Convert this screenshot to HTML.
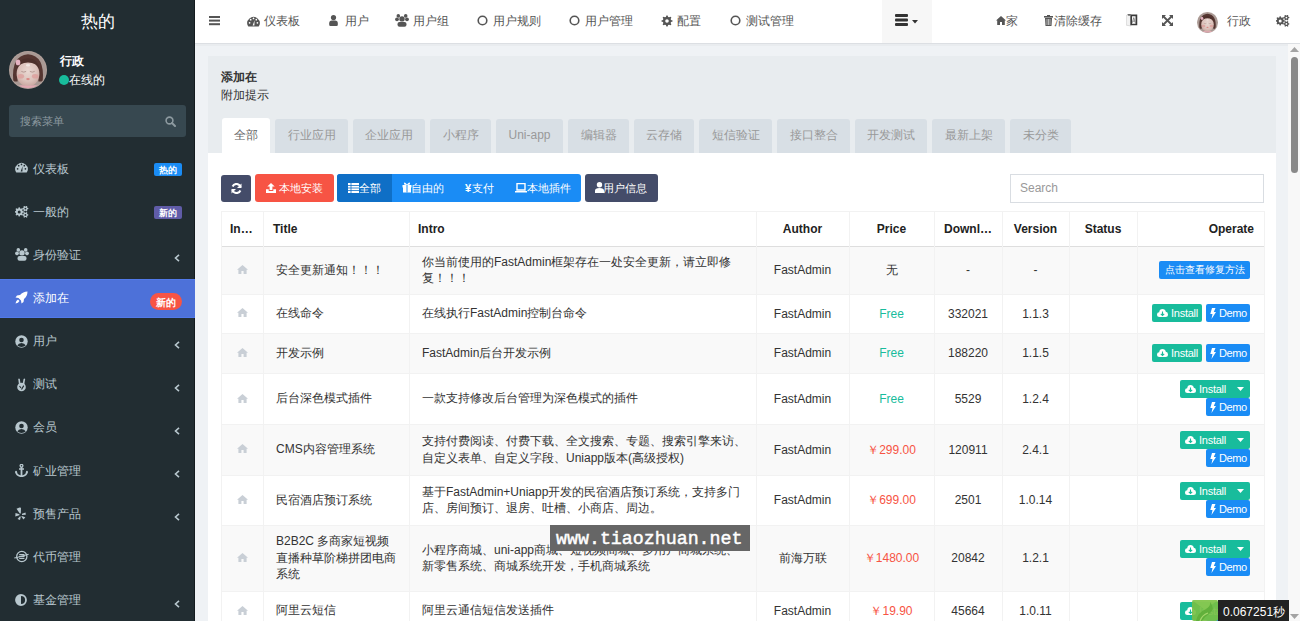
<!DOCTYPE html><html><head><meta charset="utf-8"><style>
*{box-sizing:border-box}
html,body{margin:0;padding:0;width:1300px;height:621px;overflow:hidden;background:#eff2f5;font-family:"Liberation Sans",sans-serif;font-size:12px;color:#333}
.a{position:absolute;white-space:nowrap}
svg{display:block}
</style></head><body>
<div class="a" style="left:0;top:0;width:195px;height:621px;background:#222d32"></div>
<div class="a" style="left:0;top:0;width:195px;height:43px;background:#222d32"></div>
<div class="a" style="left:194px;top:0;width:1px;height:621px;background:#141b1f"></div>
<div class="a" style="left:0;top:10px;width:195px;text-align:center;color:#fff;font-size:17px;line-height:24px">热的</div>
<svg class="a" style="left:9px;top:51px" width="38" height="38" viewBox="0 0 40 40">
<defs><clipPath id="c9"><circle cx="20" cy="20" r="19"/></clipPath>
<radialGradient id="f9" cx="50%" cy="40%" r="60%"><stop offset="0" stop-color="#e9d8d2"/><stop offset="0.65" stop-color="#dcc2bb"/><stop offset="1" stop-color="#c9a7a0"/></radialGradient></defs>
<circle cx="20" cy="20" r="20" fill="#b3a29c"/>
<g clip-path="url(#c9)">
<rect x="0" y="0" width="40" height="40" fill="#a99994"/>
<path d="M4.5 32 Q2 5 20 3.5 Q38 5 35.5 32 L31 32 Q31 14 20 13 Q9 14 9 32Z" fill="#553631"/>
<ellipse cx="20" cy="24" rx="12" ry="13.5" fill="url(#f9)"/>
<path d="M8 19 Q9 8 20 7.5 Q31 8 32 19 Q29 12 20 12 Q11 12 8 19Z" fill="#4d302b"/>
<ellipse cx="20" cy="15" rx="2.2" ry="1.4" fill="#f4eeea" opacity="0.8"/>
<ellipse cx="12.5" cy="26.5" rx="3.4" ry="2.4" fill="#dc9c9a" opacity="0.75"/>
<ellipse cx="27.5" cy="26.5" rx="3.4" ry="2.4" fill="#dc9c9a" opacity="0.75"/>
<path d="M13 21.5 Q15.5 23 18 21.5 M22 21.5 Q24.5 23 27 21.5" stroke="#a58a83" stroke-width="0.8" fill="none"/>
<ellipse cx="20" cy="29.5" rx="1.9" ry="1.2" fill="#d98a86"/>
<path d="M0 40 Q6 34.5 20 36.5 Q34 34.5 40 40Z" fill="#e3a9b3"/>
<ellipse cx="9.5" cy="12" rx="2.4" ry="3" fill="#e6b3c2"/>
</g></svg>
<div class="a" style="left:60px;top:53px;color:#fff;font-weight:bold;font-size:12px;line-height:16px">行政</div>
<div class="a" style="left:59px;top:75px;width:10px;height:10px;border-radius:50%;background:#18bc9c"></div>
<div class="a" style="left:69px;top:72px;color:#fff;font-size:12px;line-height:16px">在线的</div>
<div class="a" style="left:9px;top:105px;width:177px;height:32px;background:#374850;border-radius:3px"></div>
<div class="a" style="left:20px;top:113px;color:#8d9aa0;font-size:11px;line-height:16px">搜索菜单</div>
<svg class="a" style="left:165px;top:116px" width="11" height="11" viewBox="0 0 11 11"><circle cx="4.5" cy="4.5" r="3.4" fill="none" stroke="#8d9aa0" stroke-width="1.6"/><path d="M7 7 L10 10" stroke="#8d9aa0" stroke-width="2" stroke-linecap="round"/></svg>
<div class="a" style="left:15px;top:162.0px"><svg width="13" height="11" viewBox="0 0 13 11"><path d="M1.3 10.5 A6.2 6.2 0 1 1 11.7 10.5Z" fill="#b8c7ce"/><circle cx="2.6" cy="6.8" r="0.85" fill="#222d32"/><circle cx="3.7" cy="3.7" r="0.85" fill="#222d32"/><circle cx="6.5" cy="2.4" r="0.85" fill="#222d32"/><circle cx="9.3" cy="3.7" r="0.85" fill="#222d32"/><circle cx="10.4" cy="6.8" r="0.85" fill="#222d32"/><path d="M5.6 9.6 L7.6 4.2 L7.4 9.6Z" fill="#222d32"/></svg></div>
<div class="a" style="left:33px;top:160.5px;color:#b8c7ce;font-size:12px;line-height:16px">仪表板</div>
<div class="a" style="left:154px;top:162.5px;width:28px;height:13px;border-radius:2px;background:#1a8cf5;color:#fff;font-size:9px;font-weight:bold;line-height:14px;text-align:center">热的</div>
<div class="a" style="left:15px;top:206.0px"><svg width="14" height="13" viewBox="0 0 14 13"><path fill-rule="evenodd" d="M7.58 4.98 L8.87 5.38 L8.87 6.42 L7.58 6.82 L7.24 7.63 L7.87 8.84 L7.14 9.57 L5.93 8.94 L5.12 9.28 L4.72 10.57 L3.68 10.57 L3.28 9.28 L2.47 8.94 L1.26 9.57 L0.53 8.84 L1.16 7.63 L0.82 6.82 L-0.47 6.42 L-0.47 5.38 L0.82 4.98 L1.16 4.17 L0.53 2.96 L1.26 2.23 L2.47 2.86 L3.28 2.52 L3.68 1.23 L4.72 1.23 L5.12 2.52 L5.93 2.86 L7.14 2.23 L7.87 2.96 L7.24 4.17Z M5.70 5.90 A1.5 1.5 0 1 0 2.70 5.90 A1.5 1.5 0 1 0 5.70 5.90Z" fill="#b8c7ce"/><path fill-rule="evenodd" d="M12.46 1.83 L13.37 2.16 L13.37 3.04 L12.46 3.37 L12.10 4.00 L12.26 4.95 L11.50 5.39 L10.77 4.77 L10.03 4.77 L9.30 5.39 L8.54 4.95 L8.70 4.00 L8.34 3.37 L7.43 3.04 L7.43 2.16 L8.34 1.83 L8.70 1.20 L8.54 0.25 L9.30 -0.19 L10.03 0.43 L10.77 0.43 L11.50 -0.19 L12.26 0.25 L12.10 1.20Z M11.30 2.60 A0.9 0.9 0 1 0 9.50 2.60 A0.9 0.9 0 1 0 11.30 2.60Z" fill="#b8c7ce"/><path fill-rule="evenodd" d="M12.46 8.13 L13.37 8.46 L13.37 9.34 L12.46 9.67 L12.10 10.30 L12.26 11.25 L11.50 11.69 L10.77 11.07 L10.03 11.07 L9.30 11.69 L8.54 11.25 L8.70 10.30 L8.34 9.67 L7.43 9.34 L7.43 8.46 L8.34 8.13 L8.70 7.50 L8.54 6.55 L9.30 6.11 L10.03 6.73 L10.77 6.73 L11.50 6.11 L12.26 6.55 L12.10 7.50Z M11.30 8.90 A0.9 0.9 0 1 0 9.50 8.90 A0.9 0.9 0 1 0 11.30 8.90Z" fill="#b8c7ce"/></svg></div>
<div class="a" style="left:33px;top:203.7px;color:#b8c7ce;font-size:12px;line-height:16px">一般的</div>
<div class="a" style="left:154px;top:205.7px;width:28px;height:13px;border-radius:2px;background:#605ca8;color:#fff;font-size:9px;font-weight:bold;line-height:14px;text-align:center">新的</div>
<div class="a" style="left:15px;top:248.3px"><svg width="14" height="13" viewBox="0 0 14 13"><circle cx="3.3" cy="1.9" r="1.8" fill="#b8c7ce"/><circle cx="10.7" cy="1.9" r="1.8" fill="#b8c7ce"/><circle cx="2" cy="5.3" r="1.9" fill="#b8c7ce"/><circle cx="12" cy="5.3" r="1.9" fill="#b8c7ce"/><circle cx="7" cy="4.9" r="2.7" fill="#b8c7ce"/><rect x="2.5" y="8" width="9" height="4.8" rx="2" fill="#b8c7ce"/></svg></div>
<div class="a" style="left:33px;top:246.8px;color:#b8c7ce;font-size:12px;line-height:16px">身份验证</div>
<div class="a" style="left:174px;top:254.3px"><svg width="6" height="8" viewBox="0 0 6 8"><path d="M5 0.8 L1.5 4 L5 7.2" fill="none" stroke="#b8c7ce" stroke-width="1.6"/></svg></div>
<div class="a" style="left:0;top:279px;width:195px;height:39px;background:#4d71d9;border-top:1px solid #5179ea;border-bottom:1px solid #5179ea"></div>
<div class="a" style="left:15px;top:291.4px"><svg width="13" height="13" viewBox="0 0 13 13"><path d="M12.5 0.5 Q8 0.5 5 4 L2 4.5 L0.5 6.5 L3.5 7 L6 9.5 L6.5 12.5 L8.5 11 L9 8 Q12.5 5 12.5 0.5Z" fill="#fff"/><path d="M3 8.5 Q1 9.5 0.5 12.5 Q3.5 12 4.5 10Z" fill="#fff"/></svg></div>
<div class="a" style="left:33px;top:289.9px;color:#fff;font-size:12px;line-height:16px">添加在</div>
<div class="a" style="left:150px;top:293px;width:32px;height:17px;border-radius:9px;background:#f75444;color:#fff;font-size:10px;font-weight:bold;line-height:19px;text-align:center">新的</div>
<div class="a" style="left:15px;top:334.6px"><svg width="13" height="13" viewBox="0 0 13 13"><circle cx="6.5" cy="6.5" r="6.2" fill="#b8c7ce"/><circle cx="6.5" cy="5" r="2.3" fill="#222d32"/><path d="M2.3 10.6 Q3.5 8 6.5 8 Q9.5 8 10.7 10.6 Q9 12 6.5 12 Q4 12 2.3 10.6Z" fill="#222d32"/></svg></div>
<div class="a" style="left:33px;top:333.1px;color:#b8c7ce;font-size:12px;line-height:16px">用户</div>
<div class="a" style="left:174px;top:340.6px"><svg width="6" height="8" viewBox="0 0 6 8"><path d="M5 0.8 L1.5 4 L5 7.2" fill="none" stroke="#b8c7ce" stroke-width="1.6"/></svg></div>
<div class="a" style="left:14.5px;top:378.2px"><svg width="13" height="14" viewBox="0 0 13 14"><path d="M3.2 1 Q4 0.2 4.8 1 L5.6 6 L4 6.5Z" fill="#b8c7ce"/><path d="M8.6 1 Q9.4 0.2 10.2 1 L9.2 6.5 L7.6 6Z" fill="#b8c7ce"/><circle cx="6.5" cy="9" r="4.3" fill="#b8c7ce"/><path d="M4.5 8 L6 10 M8.8 7.6 Q7.5 9.5 6.5 11.5" stroke="#222d32" stroke-width="1.1" fill="none"/></svg></div>
<div class="a" style="left:33px;top:376.2px;color:#b8c7ce;font-size:12px;line-height:16px">测试</div>
<div class="a" style="left:174px;top:383.8px"><svg width="6" height="8" viewBox="0 0 6 8"><path d="M5 0.8 L1.5 4 L5 7.2" fill="none" stroke="#b8c7ce" stroke-width="1.6"/></svg></div>
<div class="a" style="left:15px;top:420.9px"><svg width="13" height="13" viewBox="0 0 13 13"><circle cx="6.5" cy="6.5" r="6.2" fill="#b8c7ce"/><circle cx="6.5" cy="5" r="2.3" fill="#222d32"/><path d="M2.3 10.6 Q3.5 8 6.5 8 Q9.5 8 10.7 10.6 Q9 12 6.5 12 Q4 12 2.3 10.6Z" fill="#222d32"/></svg></div>
<div class="a" style="left:33px;top:419.4px;color:#b8c7ce;font-size:12px;line-height:16px">会员</div>
<div class="a" style="left:174px;top:426.9px"><svg width="6" height="8" viewBox="0 0 6 8"><path d="M5 0.8 L1.5 4 L5 7.2" fill="none" stroke="#b8c7ce" stroke-width="1.6"/></svg></div>
<div class="a" style="left:15px;top:464.1px"><svg width="13" height="13" viewBox="0 0 13 13"><circle cx="6.5" cy="1.8" r="1.4" fill="none" stroke="#b8c7ce" stroke-width="1.3"/><path d="M6.5 3 V12" stroke="#b8c7ce" stroke-width="1.8"/><path d="M4 5 H9" stroke="#b8c7ce" stroke-width="1.5"/><path d="M0.8 7.5 Q1.5 12 6.5 12.3 Q11.5 12 12.2 7.5" fill="none" stroke="#b8c7ce" stroke-width="1.7"/><path d="M0 8.5 L1 6.5 L2.5 8.5Z M13 8.5 L12 6.5 L10.5 8.5Z" fill="#b8c7ce"/></svg></div>
<div class="a" style="left:33px;top:462.6px;color:#b8c7ce;font-size:12px;line-height:16px">矿业管理</div>
<div class="a" style="left:174px;top:470.1px"><svg width="6" height="8" viewBox="0 0 6 8"><path d="M5 0.8 L1.5 4 L5 7.2" fill="none" stroke="#b8c7ce" stroke-width="1.6"/></svg></div>
<div class="a" style="left:15px;top:507.2px"><svg width="11" height="13" viewBox="0 0 11 13"><path d="M4.5 0.5 L6 0.8 L5.8 6.5 L4.8 6.5 L1.5 1.8Z" fill="#b8c7ce"/><path d="M0.5 6 L4.5 7.3 L4.3 8.3 L0.3 9.5Z" fill="#b8c7ce"/><path d="M5 9.3 L5.8 9.8 L5 13 L2.5 12Z" fill="#b8c7ce"/><path d="M7 6.8 L10.5 5.5 L10.8 7.8 L7 8Z" fill="#b8c7ce"/><path d="M6.8 9 L10.3 10.3 L8.5 12.5 L6.3 9.5Z" fill="#b8c7ce"/></svg></div>
<div class="a" style="left:33px;top:505.7px;color:#b8c7ce;font-size:12px;line-height:16px">预售产品</div>
<div class="a" style="left:174px;top:513.2px"><svg width="6" height="8" viewBox="0 0 6 8"><path d="M5 0.8 L1.5 4 L5 7.2" fill="none" stroke="#b8c7ce" stroke-width="1.6"/></svg></div>
<div class="a" style="left:14px;top:550.3px"><svg width="15" height="13" viewBox="0 0 15 13"><circle cx="7.8" cy="6.5" r="5.1" fill="none" stroke="#b8c7ce" stroke-width="1.3"/><path d="M5.2 4.7 H10.4 M5 6.5 H10.6 M5.2 8.3 H10.4" stroke="#b8c7ce" stroke-width="1.2"/><path d="M0.3 8 Q5 7 14.6 4.2" fill="none" stroke="#b8c7ce" stroke-width="1.1"/></svg></div>
<div class="a" style="left:33px;top:548.8px;color:#b8c7ce;font-size:12px;line-height:16px">代币管理</div>
<div class="a" style="left:15px;top:593.5px"><svg width="12" height="12" viewBox="0 0 12 12"><circle cx="6" cy="6" r="5" fill="none" stroke="#b8c7ce" stroke-width="1.8"/><path d="M6 1 A5 5 0 0 0 6 11Z" fill="#b8c7ce"/></svg></div>
<div class="a" style="left:33px;top:592.0px;color:#b8c7ce;font-size:12px;line-height:16px">基金管理</div>
<div class="a" style="left:174px;top:599.5px"><svg width="6" height="8" viewBox="0 0 6 8"><path d="M5 0.8 L1.5 4 L5 7.2" fill="none" stroke="#b8c7ce" stroke-width="1.6"/></svg></div>
<div class="a" style="left:195px;top:0;width:1105px;height:44px;background:#fff;border-bottom:1px solid #dcdfe3"></div>
<div class="a" style="left:195px;top:44px;width:1093px;height:2px;background:#e9ecef"></div>
<svg class="a" style="left:209px;top:16px" width="11" height="10" viewBox="0 0 11 10"><rect x="0" y="0" width="11" height="2" fill="#555"/><rect x="0" y="3.6" width="11" height="2" fill="#555"/><rect x="0" y="7.2" width="11" height="2" fill="#555"/></svg>
<div class="a" style="left:247px;top:16px"><svg width="13" height="11" viewBox="0 0 13 11"><path d="M1.3 10.5 A6.2 6.2 0 1 1 11.7 10.5Z" fill="#555"/><circle cx="2.6" cy="6.8" r="0.85" fill="#fff"/><circle cx="3.7" cy="3.7" r="0.85" fill="#fff"/><circle cx="6.5" cy="2.4" r="0.85" fill="#fff"/><circle cx="9.3" cy="3.7" r="0.85" fill="#fff"/><circle cx="10.4" cy="6.8" r="0.85" fill="#fff"/><path d="M5.6 9.6 L7.6 4.2 L7.4 9.6Z" fill="#fff"/></svg></div>
<div class="a" style="left:264px;top:13px;color:#555;font-size:12px;line-height:16px">仪表板</div>
<div class="a" style="left:329px;top:15px"><svg width="9" height="12" viewBox="0 0 9 12"><circle cx="4.5" cy="2.6" r="2.6" fill="#555"/><path d="M0.2 9.8 V8.2 Q0.2 5.6 3 5.6 H6 Q8.8 5.6 8.8 8.2 V9.8 Q8.8 11 7.6 11 H1.4 Q0.2 11 0.2 9.8Z" fill="#555"/></svg></div>
<div class="a" style="left:345px;top:13px;color:#555;font-size:12px;line-height:16px">用户</div>
<div class="a" style="left:395px;top:14px"><svg width="14" height="13" viewBox="0 0 14 13"><circle cx="3.3" cy="1.9" r="1.8" fill="#555"/><circle cx="10.7" cy="1.9" r="1.8" fill="#555"/><circle cx="2" cy="5.3" r="1.9" fill="#555"/><circle cx="12" cy="5.3" r="1.9" fill="#555"/><circle cx="7" cy="4.9" r="2.7" fill="#555"/><rect x="2.5" y="8" width="9" height="4.8" rx="2" fill="#555"/></svg></div>
<div class="a" style="left:413px;top:13px;color:#555;font-size:12px;line-height:16px">用户组</div>
<div class="a" style="left:477px;top:15px"><svg width="11" height="11" viewBox="0 0 11 11"><circle cx="5.5" cy="5.5" r="4.3" fill="none" stroke="#555" stroke-width="1.6"/></svg></div>
<div class="a" style="left:493px;top:13px;color:#555;font-size:12px;line-height:16px">用户规则</div>
<div class="a" style="left:569px;top:15px"><svg width="11" height="11" viewBox="0 0 11 11"><circle cx="5.5" cy="5.5" r="4.3" fill="none" stroke="#555" stroke-width="1.6"/></svg></div>
<div class="a" style="left:585px;top:13px;color:#555;font-size:12px;line-height:16px">用户管理</div>
<div class="a" style="left:661px;top:15px"><svg width="12" height="12" viewBox="0 0 12 12"><path fill-rule="evenodd" d="M10.05 4.89 L11.57 5.39 L11.57 6.61 L10.05 7.11 L9.65 8.08 L10.37 9.50 L9.50 10.37 L8.08 9.65 L7.11 10.05 L6.61 11.57 L5.39 11.57 L4.89 10.05 L3.92 9.65 L2.50 10.37 L1.63 9.50 L2.35 8.08 L1.95 7.11 L0.43 6.61 L0.43 5.39 L1.95 4.89 L2.35 3.92 L1.63 2.50 L2.50 1.63 L3.92 2.35 L4.89 1.95 L5.39 0.43 L6.61 0.43 L7.11 1.95 L8.08 2.35 L9.50 1.63 L10.37 2.50 L9.65 3.92Z M7.80 6.00 A1.8 1.8 0 1 0 4.20 6.00 A1.8 1.8 0 1 0 7.80 6.00Z" fill="#555"/></svg></div>
<div class="a" style="left:677px;top:13px;color:#555;font-size:12px;line-height:16px">配置</div>
<div class="a" style="left:730px;top:15px"><svg width="11" height="11" viewBox="0 0 11 11"><circle cx="5.5" cy="5.5" r="4.3" fill="none" stroke="#555" stroke-width="1.6"/></svg></div>
<div class="a" style="left:746px;top:13px;color:#555;font-size:12px;line-height:16px">测试管理</div>
<div class="a" style="left:882px;top:0;width:50px;height:43px;background:#f7f7f7"></div>
<svg class="a" style="left:895px;top:14px" width="13" height="12" viewBox="0 0 13 12"><rect x="0" y="0" width="13" height="3" rx="1" fill="#333"/><rect x="0" y="4.5" width="13" height="3" rx="1" fill="#333"/><rect x="0" y="9" width="13" height="3" rx="1" fill="#333"/></svg>
<svg class="a" style="left:912px;top:20px" width="6" height="4" viewBox="0 0 6 4"><path d="M0 0H6L3 3.5Z" fill="#333"/></svg>
<svg class="a" style="left:996px;top:16px" width="10" height="9" viewBox="0 0 10 9"><path d="M5 0 L10 4.5 L8.8 4.5 L8.8 9 L6 9 L6 6 L4 6 L4 9 L1.2 9 L1.2 4.5 L0 4.5Z" fill="#555"/></svg>
<div class="a" style="left:1006px;top:13px;color:#555;font-size:12px;line-height:16px">家</div>
<svg class="a" style="left:1044px;top:15px" width="9" height="11" viewBox="0 0 9 11"><rect x="0" y="1" width="9" height="1.6" fill="#555"/><rect x="3" y="0" width="3" height="1.5" fill="#555"/><path d="M1 3 H8 L7.5 11 H1.5Z" fill="#555"/><path d="M3 4 V10 M4.5 4 V10 M6 4 V10" stroke="#fff" stroke-width="0.6"/></svg>
<div class="a" style="left:1054px;top:13px;color:#555;font-size:12px;line-height:16px">清除缓存</div>
<svg class="a" style="left:1126px;top:14px" width="12" height="13" viewBox="0 0 12 13"><path d="M0.3 1.5 L5 0.5 L5 12 L0.3 11.2Z" fill="#f2f2f2" stroke="#c8c8c8" stroke-width="0.6"/><path d="M1.2 0.3 L5 0.3 L3 2Z" fill="#444"/><path d="M5.2 1.3 H10.4 V10.5 H5.2Z" fill="#fff" stroke="#3a3a3a" stroke-width="1.7"/><path d="M6.3 8.8 L7.8 3.6 L9.3 8.8 M6.8 7.2 H8.8" stroke="#666" stroke-width="0.7" fill="none"/></svg>
<svg class="a" style="left:1161.5px;top:15px" width="11" height="11" viewBox="0 0 11 11"><path d="M0 0 H4 L0 4Z M11 0 V4 L7 0Z M0 11 V7 L4 11Z M11 11 H7 L11 7Z" fill="#555"/><path d="M1.5 1.5 L9.5 9.5 M9.5 1.5 L1.5 9.5" stroke="#555" stroke-width="1.8"/></svg>
<svg class="a" style="left:1197px;top:12px" width="21" height="21" viewBox="0 0 40 40">
<defs><clipPath id="cc1197"><circle cx="20" cy="20" r="19"/></clipPath>
<radialGradient id="f1197" cx="50%" cy="40%" r="60%"><stop offset="0" stop-color="#e9d8d2"/><stop offset="0.65" stop-color="#dcc2bb"/><stop offset="1" stop-color="#c9a7a0"/></radialGradient></defs>
<circle cx="20" cy="20" r="20" fill="#b3a29c"/>
<g clip-path="url(#cc1197)">
<rect x="0" y="0" width="40" height="40" fill="#a99994"/>
<path d="M4.5 32 Q2 5 20 3.5 Q38 5 35.5 32 L31 32 Q31 14 20 13 Q9 14 9 32Z" fill="#553631"/>
<ellipse cx="20" cy="24" rx="12" ry="13.5" fill="url(#f1197)"/>
<path d="M8 19 Q9 8 20 7.5 Q31 8 32 19 Q29 12 20 12 Q11 12 8 19Z" fill="#4d302b"/>
<ellipse cx="20" cy="15" rx="2.2" ry="1.4" fill="#f4eeea" opacity="0.8"/>
<ellipse cx="12.5" cy="26.5" rx="3.4" ry="2.4" fill="#dc9c9a" opacity="0.75"/>
<ellipse cx="27.5" cy="26.5" rx="3.4" ry="2.4" fill="#dc9c9a" opacity="0.75"/>
<path d="M13 21.5 Q15.5 23 18 21.5 M22 21.5 Q24.5 23 27 21.5" stroke="#a58a83" stroke-width="0.8" fill="none"/>
<ellipse cx="20" cy="29.5" rx="1.9" ry="1.2" fill="#d98a86"/>
<path d="M0 40 Q6 34.5 20 36.5 Q34 34.5 40 40Z" fill="#e3a9b3"/>
<ellipse cx="9.5" cy="12" rx="2.4" ry="3" fill="#e6b3c2"/>
</g></svg>
<div class="a" style="left:1227px;top:13px;color:#555;font-size:12px;line-height:16px">行政</div>
<div class="a" style="left:1276px;top:15px"><svg width="14" height="13" viewBox="0 0 14 13"><path fill-rule="evenodd" d="M7.58 4.98 L8.87 5.38 L8.87 6.42 L7.58 6.82 L7.24 7.63 L7.87 8.84 L7.14 9.57 L5.93 8.94 L5.12 9.28 L4.72 10.57 L3.68 10.57 L3.28 9.28 L2.47 8.94 L1.26 9.57 L0.53 8.84 L1.16 7.63 L0.82 6.82 L-0.47 6.42 L-0.47 5.38 L0.82 4.98 L1.16 4.17 L0.53 2.96 L1.26 2.23 L2.47 2.86 L3.28 2.52 L3.68 1.23 L4.72 1.23 L5.12 2.52 L5.93 2.86 L7.14 2.23 L7.87 2.96 L7.24 4.17Z M5.70 5.90 A1.5 1.5 0 1 0 2.70 5.90 A1.5 1.5 0 1 0 5.70 5.90Z" fill="#555"/><path fill-rule="evenodd" d="M12.46 1.83 L13.37 2.16 L13.37 3.04 L12.46 3.37 L12.10 4.00 L12.26 4.95 L11.50 5.39 L10.77 4.77 L10.03 4.77 L9.30 5.39 L8.54 4.95 L8.70 4.00 L8.34 3.37 L7.43 3.04 L7.43 2.16 L8.34 1.83 L8.70 1.20 L8.54 0.25 L9.30 -0.19 L10.03 0.43 L10.77 0.43 L11.50 -0.19 L12.26 0.25 L12.10 1.20Z M11.30 2.60 A0.9 0.9 0 1 0 9.50 2.60 A0.9 0.9 0 1 0 11.30 2.60Z" fill="#555"/><path fill-rule="evenodd" d="M12.46 8.13 L13.37 8.46 L13.37 9.34 L12.46 9.67 L12.10 10.30 L12.26 11.25 L11.50 11.69 L10.77 11.07 L10.03 11.07 L9.30 11.69 L8.54 11.25 L8.70 10.30 L8.34 9.67 L7.43 9.34 L7.43 8.46 L8.34 8.13 L8.70 7.50 L8.54 6.55 L9.30 6.11 L10.03 6.73 L10.77 6.73 L11.50 6.11 L12.26 6.55 L12.10 7.50Z M11.30 8.90 A0.9 0.9 0 1 0 9.50 8.90 A0.9 0.9 0 1 0 11.30 8.90Z" fill="#555"/></svg></div>
<div class="a" style="left:1288px;top:44px;width:12px;height:577px;background:#f8f8f8"></div>
<div class="a" style="left:1291px;top:57px;width:7px;height:116px;border-radius:4px;background:#898989"></div>
<svg class="a" style="left:1290px;top:47px" width="9" height="5" viewBox="0 0 9 5"><path d="M0 5 L4.5 0 L9 5Z" fill="#a3a3a3"/></svg>
<svg class="a" style="left:1290px;top:614px" width="9" height="5" viewBox="0 0 9 5"><path d="M0 0 L4.5 5 L9 0Z" fill="#a3a3a3"/></svg>
<div class="a" style="left:208px;top:56px;width:1068px;height:565px;background:#fff"></div>
<div class="a" style="left:208px;top:56px;width:1068px;height:97px;background:#e8ecef"></div>
<div class="a" style="left:221px;top:69px;font-weight:bold;color:#333;font-size:12px;line-height:16px">添加在</div>
<div class="a" style="left:221px;top:87px;color:#333;font-size:12px;line-height:16px">附加提示</div>
<div class="a" style="left:222px;top:118px;width:48px;height:35px;background:#fff;border-radius:3px 3px 0 0"></div>
<div class="a" style="left:222px;top:127px;width:48px;text-align:center;color:#666;font-size:12px;line-height:16px">全部</div>
<div class="a" style="left:275px;top:119px;width:73px;height:34px;background:#d8dfe5;border-radius:3px 3px 0 0"></div>
<div class="a" style="left:275px;top:127px;width:73px;text-align:center;color:#999;font-size:12px;line-height:16px">行业应用</div>
<div class="a" style="left:353px;top:119px;width:72px;height:34px;background:#d8dfe5;border-radius:3px 3px 0 0"></div>
<div class="a" style="left:353px;top:127px;width:72px;text-align:center;color:#999;font-size:12px;line-height:16px">企业应用</div>
<div class="a" style="left:430px;top:119px;width:61px;height:34px;background:#d8dfe5;border-radius:3px 3px 0 0"></div>
<div class="a" style="left:430px;top:127px;width:61px;text-align:center;color:#999;font-size:12px;line-height:16px">小程序</div>
<div class="a" style="left:496px;top:119px;width:67px;height:34px;background:#d8dfe5;border-radius:3px 3px 0 0"></div>
<div class="a" style="left:496px;top:127px;width:67px;text-align:center;color:#999;font-size:12px;line-height:16px">Uni-app</div>
<div class="a" style="left:568px;top:119px;width:61px;height:34px;background:#d8dfe5;border-radius:3px 3px 0 0"></div>
<div class="a" style="left:568px;top:127px;width:61px;text-align:center;color:#999;font-size:12px;line-height:16px">编辑器</div>
<div class="a" style="left:634px;top:119px;width:60px;height:34px;background:#d8dfe5;border-radius:3px 3px 0 0"></div>
<div class="a" style="left:634px;top:127px;width:60px;text-align:center;color:#999;font-size:12px;line-height:16px">云存储</div>
<div class="a" style="left:699px;top:119px;width:73px;height:34px;background:#d8dfe5;border-radius:3px 3px 0 0"></div>
<div class="a" style="left:699px;top:127px;width:73px;text-align:center;color:#999;font-size:12px;line-height:16px">短信验证</div>
<div class="a" style="left:777px;top:119px;width:73px;height:34px;background:#d8dfe5;border-radius:3px 3px 0 0"></div>
<div class="a" style="left:777px;top:127px;width:73px;text-align:center;color:#999;font-size:12px;line-height:16px">接口整合</div>
<div class="a" style="left:855px;top:119px;width:72px;height:34px;background:#d8dfe5;border-radius:3px 3px 0 0"></div>
<div class="a" style="left:855px;top:127px;width:72px;text-align:center;color:#999;font-size:12px;line-height:16px">开发测试</div>
<div class="a" style="left:932px;top:119px;width:73px;height:34px;background:#d8dfe5;border-radius:3px 3px 0 0"></div>
<div class="a" style="left:932px;top:127px;width:73px;text-align:center;color:#999;font-size:12px;line-height:16px">最新上架</div>
<div class="a" style="left:1010px;top:119px;width:61px;height:34px;background:#d8dfe5;border-radius:3px 3px 0 0"></div>
<div class="a" style="left:1010px;top:127px;width:61px;text-align:center;color:#999;font-size:12px;line-height:16px">未分类</div>
<div class="a" style="left:221px;top:175px;width:30px;height:27px;background:#444c69;border-radius:3px"></div>
<svg class="a" style="left:231px;top:183px" width="11" height="11" viewBox="0 0 11 11"><path d="M9.5 4 A4.2 4.2 0 0 0 1.6 3.5" fill="none" stroke="#fff" stroke-width="2"/><path d="M10.5 0.5 V5 H6Z" fill="#fff"/><path d="M1.5 7 A4.2 4.2 0 0 0 9.4 7.5" fill="none" stroke="#fff" stroke-width="2"/><path d="M0.5 10.5 V6 H5Z" fill="#fff"/></svg>
<div class="a" style="left:255px;top:174px;width:79px;height:28px;background:#f75444;border-radius:3px"></div>
<svg class="a" style="left:266px;top:183px" width="10" height="10" viewBox="0 0 10 10"><path d="M5 0 L8.7 3.6 H6.4 V7 H3.6 V3.6 H1.3Z" fill="#fff"/><path d="M0 6.2 H2.7 V8 H7.3 V6.2 H10 V10 H0Z" fill="#fff"/></svg>
<div class="a" style="left:279px;top:180.4px;color:#fff;font-size:11px;line-height:16px">本地安装</div>
<div class="a" style="left:337px;top:174px;width:244px;height:28px;background:#1a8cf5;border-radius:3px"></div>
<div class="a" style="left:337px;top:174px;width:55px;height:28px;background:#0f6fc6;border-radius:3px 0 0 3px"></div>
<svg class="a" style="left:348px;top:183px" width="11" height="10" viewBox="0 0 11 10"><path d="M0 0H11V10H0Z" fill="#fff"/><path d="M0 2.5H11M0 5H11M0 7.5H11M3 0V10" stroke="#0f6fc6" stroke-width="0.8"/></svg>
<div class="a" style="left:359px;top:180.4px;color:#fff;font-size:11px;line-height:16px">全部</div>
<svg class="a" style="left:402px;top:182px" width="10" height="11" viewBox="0 0 10 11"><path d="M0.5 3H9.5V5.5H0.5Z M1 5.5H9V10.5H1Z" fill="#fff"/><path d="M5 2.5 Q2 -1 2 2 Q2 3 5 3 Q8 3 8 2 Q8 -1 5 2.5Z" fill="#fff"/><path d="M5 3V10.5" stroke="#1a8cf5" stroke-width="1"/></svg>
<div class="a" style="left:411px;top:180.4px;color:#fff;font-size:11px;line-height:16px">自由的</div>
<div class="a" style="left:465px;top:180.4px;color:#fff;font-size:11px;line-height:16px;font-weight:bold">¥</div>
<div class="a" style="left:472px;top:180.4px;color:#fff;font-size:11px;line-height:16px">支付</div>
<svg class="a" style="left:515px;top:183px" width="12" height="10" viewBox="0 0 12 10"><path d="M2 0.5H10V7H2Z" fill="none" stroke="#fff" stroke-width="1.4"/><path d="M0 8H12V9.5H0Z" fill="#fff"/></svg>
<div class="a" style="left:527px;top:180.4px;color:#fff;font-size:11px;line-height:16px">本地插件</div>
<div class="a" style="left:585px;top:174px;width:73px;height:28px;background:#444c69;border-radius:3px"></div>
<svg class="a" style="left:595px;top:182px" width="9" height="11" viewBox="0 0 9 11"><circle cx="4.5" cy="2.8" r="2.7" fill="#fff"/><path d="M0 11 V8.5 Q0 6 4.5 6 Q9 6 9 8.5 V11Z" fill="#fff"/></svg>
<div class="a" style="left:603px;top:180.4px;color:#fff;font-size:11px;line-height:16px">用户信息</div>
<div class="a" style="left:1010px;top:174px;width:254px;height:29px;background:#fff;border:1px solid #d9dde2"></div>
<div class="a" style="left:1020px;top:180px;color:#999;font-size:12px;line-height:16px">Search</div>
<div class="a" style="left:221px;top:211px;width:1043px;height:35px;background:#fff"></div>
<div class="a" style="left:221px;top:246px;width:1043px;height:48px;background:#f9f9f9"></div>
<div class="a" style="left:221px;top:294px;width:1043px;height:39px;background:#fff"></div>
<div class="a" style="left:221px;top:333px;width:1043px;height:40px;background:#f9f9f9"></div>
<div class="a" style="left:221px;top:373px;width:1043px;height:51px;background:#fff"></div>
<div class="a" style="left:221px;top:424px;width:1043px;height:51px;background:#f9f9f9"></div>
<div class="a" style="left:221px;top:475px;width:1043px;height:50px;background:#fff"></div>
<div class="a" style="left:221px;top:525px;width:1043px;height:66px;background:#f9f9f9"></div>
<div class="a" style="left:221px;top:591px;width:1043px;height:49px;background:#fff"></div>
<div class="a" style="left:221px;top:211px;width:1043px;height:1px;background:#f2f2f2"></div>
<div class="a" style="left:221px;top:246px;width:1043px;height:1px;background:#dedede"></div>
<div class="a" style="left:221px;top:294px;width:1043px;height:1px;background:#f2f2f2"></div>
<div class="a" style="left:221px;top:333px;width:1043px;height:1px;background:#f2f2f2"></div>
<div class="a" style="left:221px;top:373px;width:1043px;height:1px;background:#f2f2f2"></div>
<div class="a" style="left:221px;top:424px;width:1043px;height:1px;background:#f2f2f2"></div>
<div class="a" style="left:221px;top:475px;width:1043px;height:1px;background:#f2f2f2"></div>
<div class="a" style="left:221px;top:525px;width:1043px;height:1px;background:#f2f2f2"></div>
<div class="a" style="left:221px;top:591px;width:1043px;height:1px;background:#f2f2f2"></div>
<div class="a" style="left:221px;top:211px;width:1px;height:410px;background:#f2f2f2"></div>
<div class="a" style="left:263px;top:211px;width:1px;height:410px;background:#f2f2f2"></div>
<div class="a" style="left:409px;top:211px;width:1px;height:410px;background:#f2f2f2"></div>
<div class="a" style="left:756px;top:211px;width:1px;height:410px;background:#f2f2f2"></div>
<div class="a" style="left:849px;top:211px;width:1px;height:410px;background:#f2f2f2"></div>
<div class="a" style="left:934px;top:211px;width:1px;height:410px;background:#f2f2f2"></div>
<div class="a" style="left:1002px;top:211px;width:1px;height:410px;background:#f2f2f2"></div>
<div class="a" style="left:1069px;top:211px;width:1px;height:410px;background:#f2f2f2"></div>
<div class="a" style="left:1137px;top:211px;width:1px;height:410px;background:#f2f2f2"></div>
<div class="a" style="left:1264px;top:211px;width:1px;height:410px;background:#f2f2f2"></div>
<div class="a" style="left:230px;top:221px;font-weight:bold;color:#222;font-size:12px;line-height:16px">In…</div>
<div class="a" style="left:273px;top:221px;font-weight:bold;color:#222;font-size:12px;line-height:16px">Title</div>
<div class="a" style="left:418px;top:221px;font-weight:bold;color:#222;font-size:12px;line-height:16px">Intro</div>
<div class="a" style="left:756px;top:221px;width:93px;text-align:center;font-weight:bold;color:#222;font-size:12px;line-height:16px">Author</div>
<div class="a" style="left:849px;top:221px;width:85px;text-align:center;font-weight:bold;color:#222;font-size:12px;line-height:16px">Price</div>
<div class="a" style="left:934px;top:221px;width:68px;text-align:center;font-weight:bold;color:#222;font-size:12px;line-height:16px">Downl…</div>
<div class="a" style="left:1002px;top:221px;width:67px;text-align:center;font-weight:bold;color:#222;font-size:12px;line-height:16px">Version</div>
<div class="a" style="left:1069px;top:221px;width:68px;text-align:center;font-weight:bold;color:#222;font-size:12px;line-height:16px">Status</div>
<div class="a" style="left:1137px;top:221px;width:117px;text-align:right;font-weight:bold;color:#222;font-size:12px;line-height:16px">Operate</div>
<svg class="a" style="left:237px;top:265px" width="11" height="9" viewBox="0 0 11 9"><path d="M5.5 0 L11 4.8 L9.6 4.8 L9.6 9 L6.6 9 L6.6 6 L4.4 6 L4.4 9 L1.4 9 L1.4 4.8 L0 4.8Z" fill="#c9cfd6"/></svg>
<div class="a" style="left:276px;top:261.8px;color:#333;font-size:12px;line-height:16.5px">安全更新通知！！！</div>
<div class="a" style="left:422px;top:253.5px;color:#333;font-size:12px;line-height:16.5px">你当前使用的FastAdmin框架存在一处安全更新，请立即修<br>复！！！</div>
<div class="a" style="left:756px;top:262.0px;width:93px;text-align:center;color:#333;font-size:12px;line-height:16px">FastAdmin</div>
<div class="a" style="left:849px;top:262.0px;width:85px;text-align:center;color:#333;font-size:12px;line-height:16px">无</div>
<div class="a" style="left:934px;top:262.0px;width:68px;text-align:center;color:#333;font-size:12px;line-height:16px">-</div>
<div class="a" style="left:1002px;top:262.0px;width:67px;text-align:center;color:#333;font-size:12px;line-height:16px">-</div>
<div class="a" style="left:1159px;top:261px;width:91px;height:18px;background:#1a8cf5;border-radius:2px;color:#fff;font-size:10.2px;line-height:17px;text-align:center">点击查看修复方法</div>
<svg class="a" style="left:237px;top:308px" width="11" height="9" viewBox="0 0 11 9"><path d="M5.5 0 L11 4.8 L9.6 4.8 L9.6 9 L6.6 9 L6.6 6 L4.4 6 L4.4 9 L1.4 9 L1.4 4.8 L0 4.8Z" fill="#c9cfd6"/></svg>
<div class="a" style="left:276px;top:305.2px;color:#333;font-size:12px;line-height:16.5px">在线命令</div>
<div class="a" style="left:422px;top:305.2px;color:#333;font-size:12px;line-height:16.5px">在线执行FastAdmin控制台命令</div>
<div class="a" style="left:756px;top:305.5px;width:93px;text-align:center;color:#333;font-size:12px;line-height:16px">FastAdmin</div>
<div class="a" style="left:849px;top:305.5px;width:85px;text-align:center;color:#18bc9c;font-size:12px;line-height:16px">Free</div>
<div class="a" style="left:934px;top:305.5px;width:68px;text-align:center;color:#333;font-size:12px;line-height:16px">332021</div>
<div class="a" style="left:1002px;top:305.5px;width:67px;text-align:center;color:#333;font-size:12px;line-height:16px">1.1.3</div>
<div class="a" style="left:1152px;top:304px;width:50px;height:18px;background:#18bc9c;border-radius:2px"></div><svg class="a" style="left:1157px;top:308px" width="11" height="9" viewBox="0 0 11 9"><path d="M2.5 9 Q0 9 0 6.5 Q0 4.3 2.2 4.2 Q2.5 1 5.5 1 Q8.3 1 8.8 3.8 Q11 4 11 6.5 Q11 9 8.5 9Z" fill="#fff"/><path d="M5.5 3.5 V7.5 M3.8 5.8 L5.5 7.5 L7.2 5.8" fill="none" stroke="#18bc9c" stroke-width="1.1"/></svg><div class="a" style="left:1171px;top:305px;color:#fff;font-size:11px;letter-spacing:-0.25px;line-height:16px">Install</div>
<div class="a" style="left:1206px;top:304px;width:44px;height:18px;background:#1a8cf5;border-radius:2px"></div><svg class="a" style="left:1210px;top:307.5px" width="6" height="11" viewBox="0 0 6 11"><path d="M2 0 H5.5 L3.8 4 H6 L1.5 11 L2.5 6 H0.3Z" fill="#fff"/></svg><div class="a" style="left:1219px;top:305px;color:#fff;font-size:11px;letter-spacing:-0.4px;line-height:16px">Demo</div>
<svg class="a" style="left:237px;top:348px" width="11" height="9" viewBox="0 0 11 9"><path d="M5.5 0 L11 4.8 L9.6 4.8 L9.6 9 L6.6 9 L6.6 6 L4.4 6 L4.4 9 L1.4 9 L1.4 4.8 L0 4.8Z" fill="#c9cfd6"/></svg>
<div class="a" style="left:276px;top:344.8px;color:#333;font-size:12px;line-height:16.5px">开发示例</div>
<div class="a" style="left:422px;top:344.8px;color:#333;font-size:12px;line-height:16.5px">FastAdmin后台开发示例</div>
<div class="a" style="left:756px;top:345.0px;width:93px;text-align:center;color:#333;font-size:12px;line-height:16px">FastAdmin</div>
<div class="a" style="left:849px;top:345.0px;width:85px;text-align:center;color:#18bc9c;font-size:12px;line-height:16px">Free</div>
<div class="a" style="left:934px;top:345.0px;width:68px;text-align:center;color:#333;font-size:12px;line-height:16px">188220</div>
<div class="a" style="left:1002px;top:345.0px;width:67px;text-align:center;color:#333;font-size:12px;line-height:16px">1.1.5</div>
<div class="a" style="left:1152px;top:344px;width:50px;height:18px;background:#18bc9c;border-radius:2px"></div><svg class="a" style="left:1157px;top:348px" width="11" height="9" viewBox="0 0 11 9"><path d="M2.5 9 Q0 9 0 6.5 Q0 4.3 2.2 4.2 Q2.5 1 5.5 1 Q8.3 1 8.8 3.8 Q11 4 11 6.5 Q11 9 8.5 9Z" fill="#fff"/><path d="M5.5 3.5 V7.5 M3.8 5.8 L5.5 7.5 L7.2 5.8" fill="none" stroke="#18bc9c" stroke-width="1.1"/></svg><div class="a" style="left:1171px;top:345px;color:#fff;font-size:11px;letter-spacing:-0.25px;line-height:16px">Install</div>
<div class="a" style="left:1206px;top:344px;width:44px;height:18px;background:#1a8cf5;border-radius:2px"></div><svg class="a" style="left:1210px;top:347.5px" width="6" height="11" viewBox="0 0 6 11"><path d="M2 0 H5.5 L3.8 4 H6 L1.5 11 L2.5 6 H0.3Z" fill="#fff"/></svg><div class="a" style="left:1219px;top:345px;color:#fff;font-size:11px;letter-spacing:-0.4px;line-height:16px">Demo</div>
<svg class="a" style="left:237px;top:394px" width="11" height="9" viewBox="0 0 11 9"><path d="M5.5 0 L11 4.8 L9.6 4.8 L9.6 9 L6.6 9 L6.6 6 L4.4 6 L4.4 9 L1.4 9 L1.4 4.8 L0 4.8Z" fill="#c9cfd6"/></svg>
<div class="a" style="left:276px;top:390.2px;color:#333;font-size:12px;line-height:16.5px">后台深色模式插件</div>
<div class="a" style="left:422px;top:390.2px;color:#333;font-size:12px;line-height:16.5px">一款支持修改后台管理为深色模式的插件</div>
<div class="a" style="left:756px;top:390.5px;width:93px;text-align:center;color:#333;font-size:12px;line-height:16px">FastAdmin</div>
<div class="a" style="left:849px;top:390.5px;width:85px;text-align:center;color:#18bc9c;font-size:12px;line-height:16px">Free</div>
<div class="a" style="left:934px;top:390.5px;width:68px;text-align:center;color:#333;font-size:12px;line-height:16px">5529</div>
<div class="a" style="left:1002px;top:390.5px;width:67px;text-align:center;color:#333;font-size:12px;line-height:16px">1.2.4</div>
<div class="a" style="left:1180px;top:380px;width:70px;height:18px;background:#18bc9c;border-radius:2px"></div><svg class="a" style="left:1185px;top:384px" width="11" height="9" viewBox="0 0 11 9"><path d="M2.5 9 Q0 9 0 6.5 Q0 4.3 2.2 4.2 Q2.5 1 5.5 1 Q8.3 1 8.8 3.8 Q11 4 11 6.5 Q11 9 8.5 9Z" fill="#fff"/><path d="M5.5 3.5 V7.5 M3.8 5.8 L5.5 7.5 L7.2 5.8" fill="none" stroke="#18bc9c" stroke-width="1.1"/></svg><div class="a" style="left:1199px;top:381px;color:#fff;font-size:11px;letter-spacing:-0.25px;line-height:16px">Install</div><svg class="a" style="left:1237px;top:387px" width="7" height="4" viewBox="0 0 7 4"><path d="M0 0H7L3.5 4Z" fill="#fff"/></svg>
<div class="a" style="left:1206px;top:398px;width:44px;height:18px;background:#1a8cf5;border-radius:2px"></div><svg class="a" style="left:1210px;top:401.5px" width="6" height="11" viewBox="0 0 6 11"><path d="M2 0 H5.5 L3.8 4 H6 L1.5 11 L2.5 6 H0.3Z" fill="#fff"/></svg><div class="a" style="left:1219px;top:399px;color:#fff;font-size:11px;letter-spacing:-0.4px;line-height:16px">Demo</div>
<svg class="a" style="left:237px;top:444px" width="11" height="9" viewBox="0 0 11 9"><path d="M5.5 0 L11 4.8 L9.6 4.8 L9.6 9 L6.6 9 L6.6 6 L4.4 6 L4.4 9 L1.4 9 L1.4 4.8 L0 4.8Z" fill="#c9cfd6"/></svg>
<div class="a" style="left:276px;top:441.2px;color:#333;font-size:12px;line-height:16.5px">CMS内容管理系统</div>
<div class="a" style="left:422px;top:433.0px;color:#333;font-size:12px;line-height:16.5px">支持付费阅读、付费下载、全文搜索、专题、搜索引擎来访、<br>自定义表单、自定义字段、Uniapp版本(高级授权)</div>
<div class="a" style="left:756px;top:441.5px;width:93px;text-align:center;color:#333;font-size:12px;line-height:16px">FastAdmin</div>
<div class="a" style="left:849px;top:441.5px;width:85px;text-align:center;color:#f75444;font-size:12px;line-height:16px">￥299.00</div>
<div class="a" style="left:934px;top:441.5px;width:68px;text-align:center;color:#333;font-size:12px;line-height:16px">120911</div>
<div class="a" style="left:1002px;top:441.5px;width:67px;text-align:center;color:#333;font-size:12px;line-height:16px">2.4.1</div>
<div class="a" style="left:1180px;top:431px;width:70px;height:18px;background:#18bc9c;border-radius:2px"></div><svg class="a" style="left:1185px;top:435px" width="11" height="9" viewBox="0 0 11 9"><path d="M2.5 9 Q0 9 0 6.5 Q0 4.3 2.2 4.2 Q2.5 1 5.5 1 Q8.3 1 8.8 3.8 Q11 4 11 6.5 Q11 9 8.5 9Z" fill="#fff"/><path d="M5.5 3.5 V7.5 M3.8 5.8 L5.5 7.5 L7.2 5.8" fill="none" stroke="#18bc9c" stroke-width="1.1"/></svg><div class="a" style="left:1199px;top:432px;color:#fff;font-size:11px;letter-spacing:-0.25px;line-height:16px">Install</div><svg class="a" style="left:1237px;top:438px" width="7" height="4" viewBox="0 0 7 4"><path d="M0 0H7L3.5 4Z" fill="#fff"/></svg>
<div class="a" style="left:1206px;top:449px;width:44px;height:18px;background:#1a8cf5;border-radius:2px"></div><svg class="a" style="left:1210px;top:452.5px" width="6" height="11" viewBox="0 0 6 11"><path d="M2 0 H5.5 L3.8 4 H6 L1.5 11 L2.5 6 H0.3Z" fill="#fff"/></svg><div class="a" style="left:1219px;top:450px;color:#fff;font-size:11px;letter-spacing:-0.4px;line-height:16px">Demo</div>
<svg class="a" style="left:237px;top:495px" width="11" height="9" viewBox="0 0 11 9"><path d="M5.5 0 L11 4.8 L9.6 4.8 L9.6 9 L6.6 9 L6.6 6 L4.4 6 L4.4 9 L1.4 9 L1.4 4.8 L0 4.8Z" fill="#c9cfd6"/></svg>
<div class="a" style="left:276px;top:491.8px;color:#333;font-size:12px;line-height:16.5px">民宿酒店预订系统</div>
<div class="a" style="left:422px;top:483.5px;color:#333;font-size:12px;line-height:16.5px">基于FastAdmin+Uniapp开发的民宿酒店预订系统，支持多门<br>店、房间预订、退房、吐槽、小商店、周边。</div>
<div class="a" style="left:756px;top:492.0px;width:93px;text-align:center;color:#333;font-size:12px;line-height:16px">FastAdmin</div>
<div class="a" style="left:849px;top:492.0px;width:85px;text-align:center;color:#f75444;font-size:12px;line-height:16px">￥699.00</div>
<div class="a" style="left:934px;top:492.0px;width:68px;text-align:center;color:#333;font-size:12px;line-height:16px">2501</div>
<div class="a" style="left:1002px;top:492.0px;width:67px;text-align:center;color:#333;font-size:12px;line-height:16px">1.0.14</div>
<div class="a" style="left:1180px;top:482px;width:70px;height:18px;background:#18bc9c;border-radius:2px"></div><svg class="a" style="left:1185px;top:486px" width="11" height="9" viewBox="0 0 11 9"><path d="M2.5 9 Q0 9 0 6.5 Q0 4.3 2.2 4.2 Q2.5 1 5.5 1 Q8.3 1 8.8 3.8 Q11 4 11 6.5 Q11 9 8.5 9Z" fill="#fff"/><path d="M5.5 3.5 V7.5 M3.8 5.8 L5.5 7.5 L7.2 5.8" fill="none" stroke="#18bc9c" stroke-width="1.1"/></svg><div class="a" style="left:1199px;top:483px;color:#fff;font-size:11px;letter-spacing:-0.25px;line-height:16px">Install</div><svg class="a" style="left:1237px;top:489px" width="7" height="4" viewBox="0 0 7 4"><path d="M0 0H7L3.5 4Z" fill="#fff"/></svg>
<div class="a" style="left:1206px;top:500px;width:44px;height:18px;background:#1a8cf5;border-radius:2px"></div><svg class="a" style="left:1210px;top:503.5px" width="6" height="11" viewBox="0 0 6 11"><path d="M2 0 H5.5 L3.8 4 H6 L1.5 11 L2.5 6 H0.3Z" fill="#fff"/></svg><div class="a" style="left:1219px;top:501px;color:#fff;font-size:11px;letter-spacing:-0.4px;line-height:16px">Demo</div>
<svg class="a" style="left:237px;top:553px" width="11" height="9" viewBox="0 0 11 9"><path d="M5.5 0 L11 4.8 L9.6 4.8 L9.6 9 L6.6 9 L6.6 6 L4.4 6 L4.4 9 L1.4 9 L1.4 4.8 L0 4.8Z" fill="#c9cfd6"/></svg>
<div class="a" style="left:276px;top:533.2px;color:#333;font-size:12px;line-height:16.5px">B2B2C 多商家短视频<br>直播种草阶梯拼团电商<br>系统</div>
<div class="a" style="left:422px;top:541.5px;color:#333;font-size:12px;line-height:16.5px">小程序商城、uni-app商城、短视频商城、多用户商城系统、<br>新零售系统、商城系统开发，手机商城系统</div>
<div class="a" style="left:756px;top:550.0px;width:93px;text-align:center;color:#333;font-size:12px;line-height:16px">前海万联</div>
<div class="a" style="left:849px;top:550.0px;width:85px;text-align:center;color:#f75444;font-size:12px;line-height:16px">￥1480.00</div>
<div class="a" style="left:934px;top:550.0px;width:68px;text-align:center;color:#333;font-size:12px;line-height:16px">20842</div>
<div class="a" style="left:1002px;top:550.0px;width:67px;text-align:center;color:#333;font-size:12px;line-height:16px">1.2.1</div>
<div class="a" style="left:1180px;top:540px;width:70px;height:18px;background:#18bc9c;border-radius:2px"></div><svg class="a" style="left:1185px;top:544px" width="11" height="9" viewBox="0 0 11 9"><path d="M2.5 9 Q0 9 0 6.5 Q0 4.3 2.2 4.2 Q2.5 1 5.5 1 Q8.3 1 8.8 3.8 Q11 4 11 6.5 Q11 9 8.5 9Z" fill="#fff"/><path d="M5.5 3.5 V7.5 M3.8 5.8 L5.5 7.5 L7.2 5.8" fill="none" stroke="#18bc9c" stroke-width="1.1"/></svg><div class="a" style="left:1199px;top:541px;color:#fff;font-size:11px;letter-spacing:-0.25px;line-height:16px">Install</div><svg class="a" style="left:1237px;top:547px" width="7" height="4" viewBox="0 0 7 4"><path d="M0 0H7L3.5 4Z" fill="#fff"/></svg>
<div class="a" style="left:1206px;top:558px;width:44px;height:18px;background:#1a8cf5;border-radius:2px"></div><svg class="a" style="left:1210px;top:561.5px" width="6" height="11" viewBox="0 0 6 11"><path d="M2 0 H5.5 L3.8 4 H6 L1.5 11 L2.5 6 H0.3Z" fill="#fff"/></svg><div class="a" style="left:1219px;top:559px;color:#fff;font-size:11px;letter-spacing:-0.4px;line-height:16px">Demo</div>
<svg class="a" style="left:237px;top:606px" width="11" height="9" viewBox="0 0 11 9"><path d="M5.5 0 L11 4.8 L9.6 4.8 L9.6 9 L6.6 9 L6.6 6 L4.4 6 L4.4 9 L1.4 9 L1.4 4.8 L0 4.8Z" fill="#c9cfd6"/></svg>
<div class="a" style="left:276px;top:602.4px;color:#333;font-size:12px;line-height:16.5px">阿里云短信</div>
<div class="a" style="left:422px;top:602.4px;color:#333;font-size:12px;line-height:16.5px">阿里云通信短信发送插件</div>
<div class="a" style="left:756px;top:602.6px;width:93px;text-align:center;color:#333;font-size:12px;line-height:16px">FastAdmin</div>
<div class="a" style="left:849px;top:602.6px;width:85px;text-align:center;color:#f75444;font-size:12px;line-height:16px">￥19.90</div>
<div class="a" style="left:934px;top:602.6px;width:68px;text-align:center;color:#333;font-size:12px;line-height:16px">45664</div>
<div class="a" style="left:1002px;top:602.6px;width:67px;text-align:center;color:#333;font-size:12px;line-height:16px">1.0.11</div>
<div class="a" style="left:1180px;top:602px;width:70px;height:18px;background:#18bc9c;border-radius:2px"></div><svg class="a" style="left:1185px;top:606px" width="11" height="9" viewBox="0 0 11 9"><path d="M2.5 9 Q0 9 0 6.5 Q0 4.3 2.2 4.2 Q2.5 1 5.5 1 Q8.3 1 8.8 3.8 Q11 4 11 6.5 Q11 9 8.5 9Z" fill="#fff"/><path d="M5.5 3.5 V7.5 M3.8 5.8 L5.5 7.5 L7.2 5.8" fill="none" stroke="#18bc9c" stroke-width="1.1"/></svg><div class="a" style="left:1199px;top:603px;color:#fff;font-size:11px;letter-spacing:-0.25px;line-height:16px">Install</div><svg class="a" style="left:1237px;top:609px" width="7" height="4" viewBox="0 0 7 4"><path d="M0 0H7L3.5 4Z" fill="#fff"/></svg>
<div class="a" style="left:1206px;top:620px;width:44px;height:18px;background:#1a8cf5;border-radius:2px"></div><svg class="a" style="left:1210px;top:623.5px" width="6" height="11" viewBox="0 0 6 11"><path d="M2 0 H5.5 L3.8 4 H6 L1.5 11 L2.5 6 H0.3Z" fill="#fff"/></svg><div class="a" style="left:1219px;top:621px;color:#fff;font-size:11px;letter-spacing:-0.4px;line-height:16px">Demo</div>
<div class="a" style="left:550px;top:525px;width:200px;height:26px;background:#666"></div>
<div class="a" style="left:556px;top:528px;color:#fff;font-family:'Liberation Mono',monospace;font-size:18.3px;-webkit-text-stroke:0.45px #fff;line-height:22px">www.tiaozhuan.net</div>
<svg class="a" style="left:1192px;top:600px" width="26" height="21" viewBox="0 0 26 21"><rect x="0" y="0" width="26" height="21" rx="2" fill="#78bf45" opacity="0.92"/><path d="M0 0 L13 10 L26 0Z" fill="#8ccb55" opacity="0.7"/><path d="M4 21 Q6 12 14 9 Q19 6 18 2 Q24 9 17 14 Q12 17 10 21Z" fill="#5fae3a" opacity="0.9"/><path d="M8 21 Q10 15 16 13" stroke="#a6d86e" stroke-width="1.2" fill="none"/></svg>
<div class="a" style="left:1218px;top:600px;width:71px;height:21px;background:#222"></div>
<div class="a" style="left:1223px;top:604px;color:#fff;font-size:12px;line-height:17px">0.067251秒</div>
</body></html>
